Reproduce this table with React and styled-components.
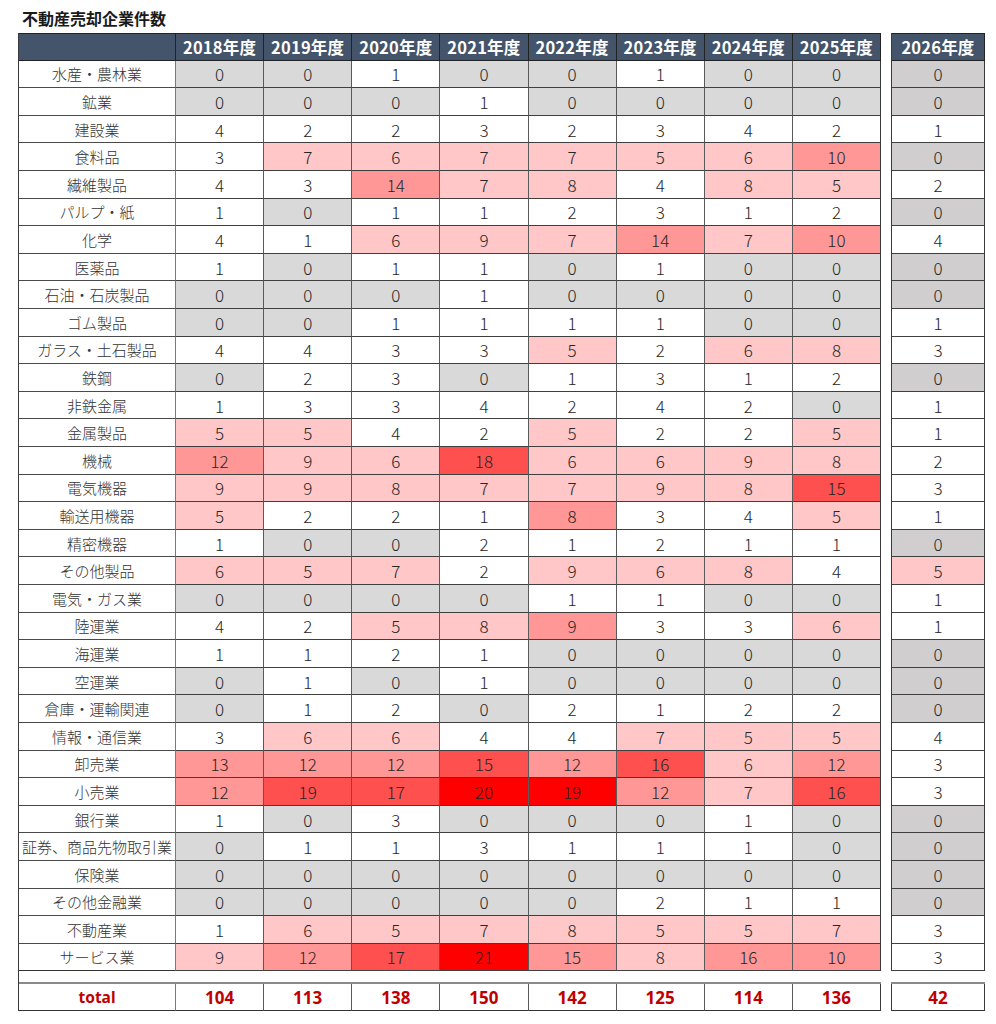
import React from "react";
import styled, { createGlobalStyle } from "styled-components";

const GlobalStyle = createGlobalStyle`
  html, body { margin: 0; padding: 0; background: #ffffff; }
  body { font-family: "Noto Sans CJK JP", "Noto Sans", sans-serif; color: #262626; }
`;

const YEARS = ["2018", "2019", "2020", "2021", "2022", "2023", "2024", "2025"];

const ROWS = [
  ["水産・農林業", [0,0,1,0,0,1,0,0,0], "ggwggwggg"],
  ["鉱業", [0,0,0,1,0,0,0,0,0], "gggwggggg"],
  ["建設業", [4,2,2,3,2,3,4,2,1], "wwwwwwwww"],
  ["食料品", [3,7,6,7,7,5,6,10,0], "wppppppmg"],
  ["繊維製品", [4,3,14,7,8,4,8,5,2], "wwmppwppw"],
  ["パルプ・紙", [1,0,1,1,2,3,1,2,0], "wgwwwwwwg"],
  ["化学", [4,1,6,9,7,14,7,10,4], "wwpppmpmw"],
  ["医薬品", [1,0,1,1,0,1,0,0,0], "wgwwgwggg"],
  ["石油・石炭製品", [0,0,0,1,0,0,0,0,0], "gggwggggg"],
  ["ゴム製品", [0,0,1,1,1,1,0,0,1], "ggwwwwggw"],
  ["ガラス・土石製品", [4,4,3,3,5,2,6,8,3], "wwwwpwppw"],
  ["鉄鋼", [0,2,3,0,1,3,1,2,0], "gwwgwwwwg"],
  ["非鉄金属", [1,3,3,4,2,4,2,0,1], "wwwwwwwgw"],
  ["金属製品", [5,5,4,2,5,2,2,5,1], "ppwwpwwpw"],
  ["機械", [12,9,6,18,6,6,9,8,2], "mpprppppw"],
  ["電気機器", [9,9,8,7,7,9,8,15,3], "pppppppprw".slice(0, 7) + "rw"],
  ["輸送用機器", [5,2,2,1,8,3,4,5,1], "pwwwmwwpw"],
  ["精密機器", [1,0,0,2,1,2,1,1,0], "wggwwwwwg"],
  ["その他製品", [6,5,7,2,9,6,8,4,5], "pppwpppwp"],
  ["電気・ガス業", [0,0,0,0,1,1,0,0,1], "ggggwwggw"],
  ["陸運業", [4,2,5,8,9,3,3,6,1], "wwppmwwpw"],
  ["海運業", [1,1,2,1,0,0,0,0,0], "wwwwggggg"],
  ["空運業", [0,1,0,1,0,0,0,0,0], "gwgwggggg"],
  ["倉庫・運輸関連", [0,1,2,0,2,1,2,2,0], "gwwgwwwwg"],
  ["情報・通信業", [3,6,6,4,4,7,5,5,4], "wppwwpppw"],
  ["卸売業", [13,12,12,15,12,16,6,12,3], "mmmrmrpmw"],
  ["小売業", [12,19,17,20,19,12,7,16,3], "mrrRRmprw"],
  ["銀行業", [1,0,3,0,0,0,1,0,0], "wgwgggwgg"],
  ["証券、商品先物取引業", [0,1,1,3,1,1,1,0,0], "gwwwwwwgg"],
  ["保険業", [0,0,0,0,0,0,0,0,0], "ggggggggg"],
  ["その他金融業", [0,0,0,0,0,2,1,1,0], "gggggwwwg"],
  ["不動産業", [1,6,5,7,8,5,5,7,3], "wpppppppw"],
  ["サービス業", [9,12,17,21,15,8,16,10,3], "pmrRmpmmw"],
];

const TOTALS = [104, 113, 138, 150, 142, 125, 114, 136, 42];

const FILL = {
  g: "#d9d9d9",
  w: "#ffffff",
  p: "#ffc7c7",
  m: "#ff9797",
  r: "#ff5050",
  R: "#ff0000",
};

const Page = styled.div`
  padding: 8px 0 0 18px;
  width: 996px;
  box-sizing: border-box;
`;

const Title = styled.h1`
  margin: 0 0 5px 4px;
  font-size: 16px;
  line-height: 20px;
  font-weight: 700;
  color: #1a1a1a;
`;

const Tables = styled.div`
  display: flex;
  align-items: flex-start;
  gap: 10px;
`;

const Grid = styled.div`
  display: grid;
  grid-template-columns: ${(p) => p.$cols};
  grid-template-rows: 27.7px repeat(33, 27.6px) 13px 27px;
  border-left: 1px solid #3a3a3a;
  box-sizing: border-box;
`;

const HeadCell = styled.div`
  background: #44546a;
  color: #ffffff;
  font-size: 16.5px;
  font-weight: 700;
  display: flex;
  align-items: center;
  justify-content: center;
  border-top: 1px solid #222;
  border-right: 1px solid #222;
  border-bottom: 1px solid #222;
  box-sizing: border-box;
  letter-spacing: 0.2px;
`;

const LabelCell = styled.div`
  background: #ffffff;
  font-size: 15px;
  font-weight: 300;
  color: #333;
  display: flex;
  align-items: center;
  justify-content: center;
  white-space: nowrap;
  border-right: 1px solid #7a7a7a;
  border-bottom: 1px solid ${(p) => (p.$last ? "#333" : "#4a4a4a")};
  box-sizing: border-box;
`;

const NumCell = styled.div`
  background: ${(p) => p.$fill};
  font-size: 17px;
  font-weight: 300;
  color: #262626;
  display: flex;
  align-items: center;
  justify-content: center;
  border-right: 1px solid ${(p) => (p.$edge ? "#3a3a3a" : "#5a5a5a")};
  border-bottom: 1px solid #3f3f3f;
  box-sizing: border-box;
`;

const Spacer = styled.div`
  grid-column: 1 / -1;
  background: #ffffff;
  border-bottom: 2px solid #8a8a8a;
  box-sizing: border-box;
  margin-left: ${(p) => (p.$open ? "-1px" : "0")};
`;

const TotalLabel = styled.div`
  color: #c00000;
  font-size: 15.5px;
  font-weight: 700;
  font-family: "Noto Sans", "Noto Sans CJK JP", sans-serif;
  display: flex;
  align-items: center;
  justify-content: center;
  border-right: 1px solid #7a7a7a;
  border-bottom: 1px solid #333;
  box-sizing: border-box;
`;

const TotalCell = styled.div`
  color: #c00000;
  font-size: 17px;
  font-weight: 700;
  font-family: "Noto Sans", "Noto Sans CJK JP", sans-serif;
  display: flex;
  align-items: center;
  justify-content: center;
  border-right: 1px solid ${(p) => (p.$edge ? "#3a3a3a" : "#5a5a5a")};
  border-bottom: 1px solid #333;
  box-sizing: border-box;
`;

function MainTable() {
  return (
    <Grid $cols="157px repeat(8, 88.125px)">
      <HeadCell />
      {YEARS.map((y) => (
        <HeadCell key={y}>{y}年度</HeadCell>
      ))}
      {ROWS.map(([label, vals, lv], r) => (
        <React.Fragment key={label}>
          <LabelCell $last={r === ROWS.length - 1}>{label}</LabelCell>
          {vals.slice(0, 8).map((v, i) => (
            <NumCell key={i} $fill={FILL[lv[i]]} $edge={i === 7}>
              {v}
            </NumCell>
          ))}
        </React.Fragment>
      ))}
      <Spacer />
      <TotalLabel>total</TotalLabel>
      {TOTALS.slice(0, 8).map((t, i) => (
        <TotalCell key={i} $edge={i === 7}>
          {t}
        </TotalCell>
      ))}
    </Grid>
  );
}

function SideTable() {
  return (
    <Grid $cols="93px">
      <HeadCell>2026年度</HeadCell>
      {ROWS.map(([label, vals, lv]) => (
        <NumCell
          key={label}
          $edge
          $fill={lv[8] === "g" ? "#d0cece" : FILL[lv[8]]}
        >
          {vals[8]}
        </NumCell>
      ))}
      <Spacer $open />
      <TotalCell $edge>{TOTALS[8]}</TotalCell>
    </Grid>
  );
}

export default function App() {
  return (
    <>
      <GlobalStyle />
      <Page>
        <Title>不動産売却企業件数</Title>
        <Tables>
          <MainTable />
          <SideTable />
        </Tables>
      </Page>
    </>
  );
}
